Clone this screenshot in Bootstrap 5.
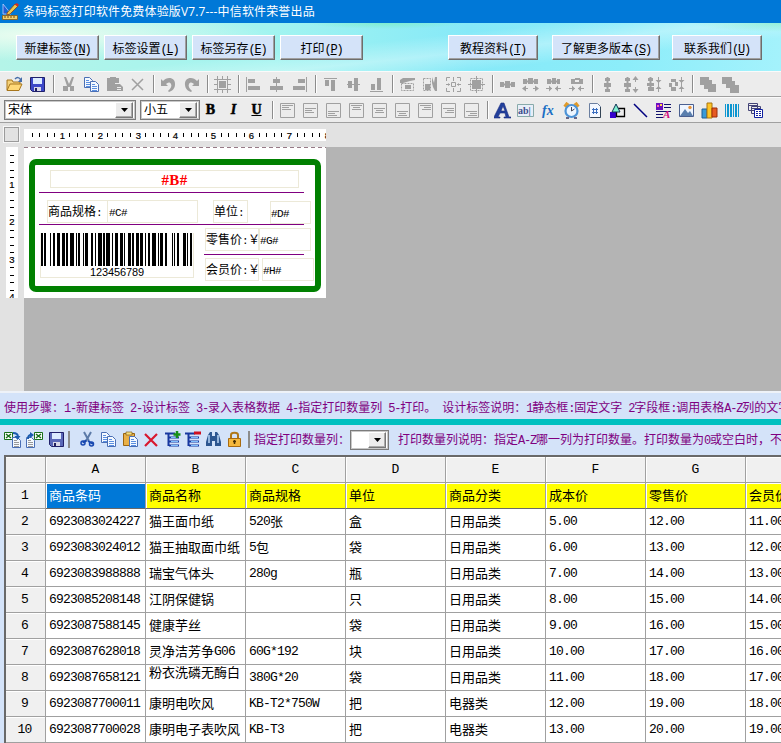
<!DOCTYPE html>
<html lang="zh-CN">
<head>
<meta charset="utf-8">
<meta name="viewport" content="width=device-width, initial-scale=1">
<title>条码标签打印软件</title>
<link href="https://cdn.jsdelivr.net/npm/bootstrap@5.3.0/dist/css/bootstrap.min.css" rel="stylesheet">
<style>
html,body{height:743px;overflow:hidden}
body{width:781px;font:12px/14px "Noto Sans CJK SC",sans-serif;color:#000;background:#d4e3f9}
svg{display:block;flex:none}
.la{font-family:"Liberation Mono",monospace;font-size:12px;letter-spacing:-1.2px;line-height:1}
.titlebar{height:23px;background:#0078d7;color:#fff;padding-left:2px}
.titlebar .cap{font-family:"Open Sans","Noto Sans CJK SC",sans-serif;margin-left:4px;white-space:nowrap;letter-spacing:.15px}
.banner{height:48px;padding:12px 0 0 16px;background:
 radial-gradient(ellipse 80px 6px at 385px 0,#6fedb088,transparent),
 radial-gradient(ellipse 90px 9px at 781px 0,#7cecc099,transparent),
 linear-gradient(174deg,transparent 45%,#ffffff55 60%,transparent 75%),
 radial-gradient(ellipse 230px 26px at 40px 12px,#ecfdf0,transparent),
 linear-gradient(90deg,#b4f4e8,#a2f4f0 35%,#86e9f8 60%,#8cedfa 80%,#a4f2fc)}
.winbtn{height:25px;background:#d4e3f9;border:1px solid;border-color:#fff #6d6d6d #6d6d6d #fff;box-shadow:inset -1px -1px #a0a0a0;border-radius:0;padding:0;font-size:12px;line-height:20px;color:#000;white-space:pre;flex:none}
.w-std{width:83px;margin-right:5px}
.w-mid{width:90px}
.w-wide{width:108px;margin:0 12px 0 14px}
.lastbtn{margin-right:19px}
.tools{height:26px;background:#ececec;border-top:1px solid #fafafa;border-bottom:1px solid #a0a0a0}
.tool{width:23px;flex:none;display:flex;justify-content:center}
.vsep{width:8px;height:18px;flex:none;border-left:4px solid transparent;background:linear-gradient(90deg,#8c8c8c 1px,#fff 1px,#fff 2px,transparent 2px) no-repeat content-box}
.lead-in{width:3px;flex:none}
.combo{height:20px;background:#fff;border:1px solid #7b7b7b;outline:1px solid #c8c8c8;outline-offset:-2px;padding:1px 2px 1px 3px;flex:none}
.drop{width:18px;height:16px;background:#ececec;border:1px solid;border-color:#fff #777 #777 #fff;box-shadow:inset -1px -1px #aaa}
.combo>span:first-child:not(.drop){margin-top:-3px}
.fmt{font:bold 14px/18px "Liberation Serif",serif;-webkit-text-stroke:.5px #000}
#fontbox{width:132px;margin-left:4px}
#sizebox{width:60px;margin-right:-1px}
.editor{height:268px;background:#e2e2e2;padding-top:6px}
.desk{background:#b4b4b4}
.paper{width:302px;height:151px;background:#fff;position:relative;overflow:hidden}
.ruler-row{height:18px}
.corner{width:15px;height:15px;border:1px solid #9b9b9b;outline:1px solid #f6f6f6;margin:-2px 5px 0 4px}
.desk-row{padding-left:6px}
#vr{margin-right:6px}
.fld{position:absolute;border:1px solid #ece9d8;white-space:pre;line-height:20px}
.fld .la{font-size:11px;letter-spacing:-.6px}
.f-b{left:26px;top:23px;width:249px;height:18px;color:#f00;text-align:center;line-height:17px}
.fld.f-b .la{font:bold 15px/17px "Liberation Serif",serif;letter-spacing:.3px}
.f-1{left:23px;top:53px;width:61px;height:23px}
.f-2{left:83px;top:53px;width:91px;height:23px;padding-left:1px}
.f-3{left:189px;top:53px;width:35px;height:23px}
.f-4{left:246px;top:54px;width:41px;height:23px}
.f-5{left:181px;top:81px;width:54px;height:23px}
.f-6{left:235px;top:81px;width:52px;height:23px}
.f-7{left:181px;top:111px;width:54px;height:23px}
.f-8{left:238px;top:111px;width:52px;height:23px}
.f-n{left:16px;top:118px;width:154px;height:13px;text-align:center;line-height:11px;border-top:0}
.fld.f-n .la{font-family:"Liberation Sans",sans-serif;font-size:11px;letter-spacing:-.1px}
.purple{color:#800080;white-space:pre}
.hint{height:28px;border-top:2px solid #eef2f8;padding:7px 0 0 4px;background:#d4e3f9;overflow:hidden}
.teal{height:6px;background:#00c0c0}
.gridbar{height:30px;padding:0 0 2px 1px;overflow:hidden}
.gsep{width:2px;height:17px;background:#8c8c8c;flex:none}
.g1{margin:0 7px 0 1px}
.g2{margin:0 4px 0 4px}
#qty{width:39px;margin:2px 9px 0 0}
.sheet{margin-left:4px;border-left:2px solid #696969;border-top:2px solid #696969;height:288px;background:#fff;overflow:hidden}
.sheet .la{position:relative;top:-1px}
.line{height:26px;display:flex}
.line>:first-child{margin-left:-1px}
.cellx{width:100px;height:26px;border-right:1px solid #a0a0a0;border-bottom:1px solid #a0a0a0;padding:0 4px;font-size:13px;line-height:24px;white-space:pre;flex:none}
.cellx .la{font-size:13px;letter-spacing:-.8px}
.cellx.rh{width:41px}
.cellx.hd{background:#f0f0f0;text-align:center;box-shadow:inset 1px 1px #fff;padding:0 4px 0 3px}
.cellx.yl{background:#ff0;box-shadow:inset 1px 1px #fff;border-bottom-color:#696969}
.cellx.sel{background:#0078d7;color:#fff}
.cellx.up{line-height:14px}
.cellx:not(.hd){padding:0 3px}
</style>
</head>
<body>
<div class="titlebar d-flex align-items-center">
 <svg width="17" height="17" viewBox="0 0 17 17"><path d="M1 1v10h8z" fill="#2a5bd0" stroke="#b8d0ff" stroke-width=".8"/><path d="M3.500 6v3H6z" fill="#0078d7"/><path d="M5 10L13 1l3 2-8 8-3 1z" fill="#e9c84c" stroke="#8a3b12" stroke-width=".8"/><path d="M12.500 1.500L15 0l2 2-1.500 1.500z" fill="#d03020"/><path d="M.5 12.500h15v4H.5z" fill="#f0d070" stroke="#8a5a10" stroke-width=".8"/><path d="M3 13v2m3-2v2m3-2v2m3-2v2" stroke="#7a4a08"/></svg>
 <span class="cap">条码标签打印软件免费体验版V7.7---中信软件荣誉出品</span>
</div>
<div class="banner d-flex sx">
 <button class="btn winbtn w-std">新建标签(<u>N</u>)</button>
 <button class="btn winbtn w-std">标签设置(<u>L</u>)</button>
 <button class="btn winbtn w-std">标签另存(<u>E</u>)</button>
 <button class="btn winbtn w-std">打印(<u>P</u>)</button>
 <button class="btn winbtn w-mid ms-auto">教程资料(<u>T</u>)</button>
 <button class="btn winbtn w-wide">了解更多版本(<u>S</u>)</button>
 <button class="btn winbtn w-mid lastbtn">联系我们(<u>U</u>)</button>
</div>
<div class="tools d-flex align-items-center" id="bar1"></div>
<div class="tools d-flex align-items-center sx" id="bar2">
 <div class="combo d-flex justify-content-between align-items-center me-1" id="fontbox"><span>宋体</span><span class="drop d-flex align-items-center justify-content-center"><svg width="7" height="4"><path d="M0 0h7L3.500 4z"/></svg></span></div>
 <div class="combo d-flex justify-content-between align-items-center" id="sizebox"><span>小五</span><span class="drop d-flex align-items-center justify-content-center"><svg width="7" height="4"><path d="M0 0h7L3.500 4z"/></svg></span></div>
</div>
<div class="editor d-flex flex-column">
 <div class="d-flex ruler-row"><div class="corner"></div><svg id="hr" width="302" height="12"></svg></div>
 <div class="d-flex flex-grow-1 desk-row">
  <svg id="vr" width="12" height="151"></svg>
  <div class="desk flex-grow-1">
   <div class="paper sx">
    <svg width="302" height="151" id="art"></svg>
    <div class="fld f-b"><b>#B#</b></div>
    <div class="fld f-1">商品规格:</div><div class="fld f-2">#C#</div>
    <div class="fld f-3">单位:</div><div class="fld f-4">#D#</div>
    <div class="fld f-5">零售价:￥</div><div class="fld f-6">#G#</div>
    <div class="fld f-7">会员价:￥</div><div class="fld f-8">#H#</div>
    <div class="fld f-n">123456789</div>
   </div>
  </div>
 </div>
</div>
<div class="hint purple sx"><span>使用步骤：1-新建标签 2-设计标签 3-录入表格数据 4-指定打印数量列 5-打印。 设计标签说明：1静态框:固定文字 2字段框:调用表格A-Z列的文字</span></div>
<div class="teal"></div>
<div class="gridbar d-flex align-items-center" id="bar3"></div>
<div class="sheet sx" id="sheet"></div>

<script src="https://cdn.jsdelivr.net/npm/bootstrap@5.3.0/dist/js/bootstrap.bundle.min.js"></script>
<script>
const G='#a0a0a0';
const svg=b=>`<svg width="17" height="17" viewBox="0 0 17 17">${b}</svg>`;
const g=d=>`<path d="${d}" fill="${G}"/>`;
const s=(d,c=G,w=1)=>`<path d="${d}" fill="none" stroke="${c}" stroke-width="${w}"/>`;
const tool=b=>`<div class="tool">${b}</div>`, sep='<div class="vsep"></div>';
const flop=`<path d="M1.500 1.500h14v14h-12l-2-2z" fill="#3c48c8" stroke="#20206a"/><path d="M4 2h9v6H4z" fill="#dcebff"/><path d="M5 11h7v4H5z" fill="#d8d8e8"/><path d="M6 12h2v3H6z" fill="#202060"/>`;
const doc=(x,y)=>`<path d="M${x+.5} ${y+.5}h5l3 3v7h-8z" fill="#f4f9ff" stroke="#4a6fb5"/><path d="M${x+2} ${y+3.500}h3m-3 2h5m-5 2h5m-5 2h5" stroke="#5b8fe0" fill="none"/>`;
const I={
open:'<path d="M1 14V4h5l1 2h7v3" fill="#f5d27a" stroke="#a8761c"/><path d="M1 14.500L4 8h12l-3 6.500z" fill="#ffd978" stroke="#a8761c"/><path d="M9 3c2-2 4-2 6 1" fill="none" stroke="#456ca8" stroke-width="1.500"/><path d="M16 1v5h-4z" fill="#456ca8"/>',
save:flop,
cut:g('M4 1h2l3 7 3-7h2l-3 9h3v5h-4v-4H8v4H3v-5h4z'),
copy:doc(1,1)+doc(7,5),
paste:g('M1 2h3V1h6v1h3v5H9v8H1z')+g('M9 8h5l3 3v4H9z')+s('M11 11.500h4m-4 2h4','#ececec'),
del:s('M3 3l11 11M14 3L3 14',G,1.500),
undo:g('M1 3l2 2c4-5 13-4 12 4-.5 4-3 6-6 7l-1-1c3-3 4-5 3-7-1-2-3-2-5 0l2 2H1z'),
redo:g('M16 3l-2 2C10 0 1 1 2 9c.5 4 3 6 6 7l1-1C6 12 5 10 6 8c1-2 3-2 5 0l-2 2h7z'),
snap:g('M5 5h7v7H5z')+s('M3.500 0v17M13.500 0v17M0 3.500h17M0 13.500h17')+s('M0 8.500h3m11 0h3M8.500 0v3m0 11v3'),
al:s('M1.500 1v15')+g('M3 3h7v4H3zM3 10h12v4H3z'),
ac:s('M8.500 1v15')+g('M5 3h7v4H5zM2 10h13v4H2z'),
ar:s('M15.500 1v15')+g('M7 3h7v4H7zM2 10h12v4H2z'),
at:s('M2 2.500h13')+g('M3 4h4v6H3zM9 4h4v11H9z'),
am:s('M2 8.500h13')+g('M3 5h4v7H3zM9 2h4v13H9z'),
ab:s('M2 15.500h13')+g('M3 8h4v6H3zM9 2h4v12H9z'),
w1:g('M1 4l3-2h12v2l-5 1-7 2H1zM6 9h6v4H6z')+`<path d="M2.500 7.500h12v7h-12z" fill="none" stroke="${G}" stroke-dasharray="2 1"/>`,
w2:g('M10 1l2 6 1-6h2v14h-2l-2-4-1-4zM3 8h5v6H3z')+`<path d="M1.500 2.500h7v12h-7z" fill="none" stroke="${G}" stroke-dasharray="2 1"/>`,
w3:s('M1.500 5V1.500H5M12 1.500h3.500V5M1.500 12v3.500H5m7 0h3.500V12M6.500 6.500h4v4h-4zM1 8.500h4m7 0h4M8.500 1v4m0 7v4')+g('M3 7l2 1.500L3 10zM14 7l-2 1.500 2 1.500z'),
w4:g('M4 4h9v9H4z')+s('M0 8.500h17M8.500 0v17')+`<path d="M2.500 2.500h12v12h-12z" fill="none" stroke="${G}" stroke-dasharray="2 1"/>`,
h0:s('M1 8.500h15',G,2)+g('M1 6h4v5H1zM6 5h5v7H6zM12 6h4v5h-4z'),
h1:s('M1 5.500h15',G,2)+s('M1 12.500h5m5 0h5')+g('M1 3h4v5H1zM6 2h5v6H6zM12 3h4v5h-4zM0 12.500l4-3v6zM17 12.500l-4-3v6z'),
h2:s('M2 5.500h13',G,2)+s('M1 12.500h6m3 0h6')+g('M2 3h4v5H2zM7 2h4v6H7zM12 3h3v5h-3zM7 12.500l-3-3v6zM10 12.500l3-3v6z'),
h3:s('M1 12.500h6m3 0h6')+g('M3 3h4v5H3zM7 2h5v2H7zM11 3h4v5h-4zM7 6h5v2H7zM7 12.500l-3-3v6zM10 12.500l3-3v6z'),
v0:s('M8.500 1v15',G,2)+g('M6 2h5v3H6zM5 7h7v4H5zM6 13h5v3H6z'),
v1:s('M5.500 1v15',G,2)+s('M13.500 2v4m0 5v4')+g('M3 2h5v3H3zM2 7h7v4H2zM3 13h5v3H3zM13.500 0l3 4h-6zM13.500 17l3-4h-6z'),
v2:s('M5.500 1v14',G,2)+s('M13.500 1v15')+g('M3 2h5v3H3zM2 7h7v3H2zM3 11h6v4H3zM13.500 7l3-3h-6zM13.500 10l3 3h-6z'),
v3:s('M13.500 1v15')+g('M3 3h5v3H3zM1 7h3v4H1zM7 6h3v4H7zM3 11h5v4H3zM13.500 7l3-3h-6zM13.500 10l3 3h-6z'),
fr:g('M1 1h9v3h3v4h4v8H9v-3H5V9H1z'),
bk:g('M0 1h10v4h3v4h4v8H8v-5H4V8H0z')};
document.getElementById('bar1').innerHTML='<div class="lead-in"></div>'+
 [['open','save'],['cut','copy','paste','del'],['undo','redo'],['snap'],['al','ac','ar'],['at','am','ab'],['w1','w2','w3','w4'],['h0','h1','h2','h3'],['v0','v1','v2','v3'],['fr','bk']]
 .map(a=>a.map(k=>tool(svg(I[k]))).join('')).join(sep);
// text-position buttons: left/centre/right, each with top/middle/bottom
let pos='';
for(const h of [0,1,2])for(const v of [0,1,2]){
 const y=[3,6,9][v]+.5,x=w=>h==0?3:h==1?(17-w)/2:14-w;
 pos+=tool(svg(s('M1.500 1.500h14v14h-14z')+[[11,0],[7,2],[9,4]].map(([w,d])=>s(`M${x(w)} ${y+d}h${w}`)).join('')));
}
const C=[
'<path d="M0 15L7 1h3l5 14h2v1h-7v-1h2l-1-4H6l-2 4h2v1H0zM7 9h4L9 4z" fill="#22409c" stroke="#1c2c80" stroke-width=".6"/>',
'<path d="M.5 2.500h16v12H.5z" fill="#e8eef8" stroke="#8aa"/><text x="1" y="12" font-family="Liberation Serif" font-weight="bold" font-size="10" fill="#3c4f8c">ab|</text>',
'<text x="2" y="13" font-family="Liberation Serif" font-style="italic" font-weight="bold" font-size="14" fill="#1b6fc4">fx</text>',
'<path d="M2 5l3-4M15 5l-3-4" stroke="#e09a2a" stroke-width="4"/><circle cx="8.500" cy="9" r="6" fill="#eef6ff" stroke="#4d94d8" stroke-width="2.200"/><path d="M8.500 9V5m0 4l3-2" fill="none" stroke="#445"/><path d="M3 16h3m5 0h3" stroke="#668" stroke-width="2"/>',
'<path d="M3.500 1.500h8l3 3v11h-11z" fill="#f4f8ff" stroke="#6b7fa0"/><path d="M14.500 5v10.500h-10" fill="none" stroke="#345"/><path d="M7.500 6v6m3-6v6M6 7.500h6m-6 3h6" stroke="#3b6fc0"/>',
'<path d="M1 10h6v6H1z" fill="#3300cc"/><path d="M7.500 6.500h8v8h-8z" fill="none" stroke="#000" stroke-width="1.300"/><path d="M7 2l4 8H3z" fill="#7ff0d0" stroke="#135"/>',
'<path d="M2 2l13 13" stroke="#000080" stroke-width="1.500"/>',
'<path d="M1 1h7v7H1z" fill="#6a10c0"/><path d="M5 2h2v2H5z" fill="#ffd84a"/><path d="M2 3h2v2H2z" fill="#f6a"/><path d="M9 2.500h7M9 5.500h7M1 9.500h15M1 12.500h7M1 15.500h7" stroke="#10106a"/><text x="8" y="16" font-family="Liberation Serif" font-style="italic" font-weight="bold" font-size="11" fill="#d41080">A</text>',
'<path d="M1.500 2.500h14v12h-14z" fill="#eef5ff" stroke="#4a5f90"/><path d="M2 14l5-7 3 4 2-2 3 5z" fill="#5a7fae"/><circle cx="12" cy="5.500" r="1.700" fill="#e8923a"/>',
'<path d="M1 7h5v9H1z" fill="#3a9ad8" stroke="#1c5c98"/><path d="M6 1h5v15H6z" fill="#ffc526" stroke="#a87410"/><path d="M11 6h5v9h-5z" fill="#e65a22" stroke="#9c2c08"/>',
'<path d="M1 2h1v13H1zM3 2h2v13H3zM6 2h2v13H6zM9 2h1v13H9zM11 2h2v13h-2zM14 2h1v13h-1z" fill="#0d96d0"/>',
'<path d="M1.500 1.500h9v7h-9zM4.500 4.500h9v7h-9z" fill="#eee" stroke="#447"/><path d="M1 3.500h10M4 6.500h10" stroke="#447"/><path d="M7.500 7.500h8v8h-8z" fill="#fff" stroke="#1020a0"/><path d="M9 9.500h2m1 0h2m-5 2h2m1 0h2m-5 2h2m1 0h2" stroke="#1020a0"/>'];
document.getElementById('bar2').insertAdjacentHTML('beforeend',
 '<div class="tool fmt"><span class="raw">B</span></div><div class="tool fmt fst-italic"><span class="raw">I</span></div><div class="tool fmt"><u class="raw">U</u></div>'+sep+pos+sep+C.map(c=>tool(svg(c))).join(''));
// rulers: five divisions per centimetre
let hr='<rect width="302" height="12" fill="#fff"/>',vr='<rect width="12" height="151" fill="#fff"/>';
const num=(x,y,n)=>`<text x="${x}" y="${y}" text-anchor="middle" font-family="Liberation Sans" font-size="9.500" fill="#000" stroke="#000" stroke-width=".2">${n}</text>`;
for(let i=1;i<=40;i++){const p=Math.round(i*7.57),q=Math.round(i*7.5);
 hr+=i%5?`<rect x="${p}" y="4" width="1" height="4"/>`:num(p+.5,9.5,i/5);
 if(i<21)vr+=i%5?`<rect x="4" y="${q}" width="4" height="1"/>`:num(6,q+3,i/5);}
document.getElementById('hr').innerHTML=hr;document.getElementById('vr').innerHTML=vr;
// label artwork: frame, rules and barcode
const bars=[[41,2],[44,2],[50,1],[53,2],[57,3],[62,3],[66,2],[70,4],[76,1],[78,2],[83,1],[85,3],[91,2],[95,1],[98,4],[103,2],[106,4],[112,1],[115,3],[120,3],[124,1],[128,3],[132,2],[136,3],[140,3],[145,1],[148,2],[152,4],[158,1],[160,3],[165,2],[172,1],[174,1],[177,2],[183,3],[187,1],[190,2]];
document.getElementById('art').innerHTML='<path d="M0 .5h302" stroke="#967a86" stroke-dasharray="4 3"/>'+
 '<rect x="8" y="15" width="286" height="127" rx="4" fill="none" stroke="#008000" stroke-width="6"/>'+
 '<path d="M15 45.500h265M15 77.500h265M180 107.500h100" stroke="#800080"/><path d="M17 86v33M169.500 86v33" stroke="#ece9d8"/>'+
 bars.map(([x,w])=>`<rect x="${x-24}" y="86" width="${w}" height="33"/>`).join('');
// grid toolbar
const xl=x=>`<path d="M${x+.5} 1.500h8v7h-8z" fill="#fff" stroke="#187018"/><path d="M${x+2} 3l5 4m0-4l-5 4" stroke="#187018" stroke-width="1.500"/>`;
const tree='<path d="M1 2.500h10M4.500 3v12M5 6.500h10M5 10.500h10M5 14.500h10" stroke="#1838a0" stroke-width="2"/><path d="M7 6.500h7M7 10.500h7M7 14.500h7" stroke="#7fc0ff"/>';
const B=[[xl(0)+doc(8,6).replace(/#5b8fe0/,'#999')+'<path d="M9 2c3 0 5 1 5 4" fill="none" stroke="#1c5cae" stroke-width="2"/><path d="M10.500 5h6l-3 4z" fill="#1c5cae"/>',22],
[xl(8)+doc(0,6).replace(/#5b8fe0/,'#999')+'<path d="M2 8c0-3 1-4 3-4" fill="none" stroke="#1c5cae" stroke-width="2"/><path d="M4 1l4 3-4 3z" fill="#1c5cae"/>',22],
[flop.replace('#3c48c8','#5a68b8'),22],0,
['<path d="M5 1l5 9M12 1L7 10" stroke="#5d7ba8" stroke-width="2"/><path d="M3.500 11.500l4-2M14 13l-5-3" stroke="#1848b0" stroke-width="2"/><circle cx="4" cy="12" r="2" fill="none" stroke="#1848b0" stroke-width="1.500"/><circle cx="12.500" cy="13" r="2" fill="none" stroke="#1848b0" stroke-width="1.500"/>',21],
[doc(1,1)+doc(7,5),21],
['<path d="M1.500 2.500h11v12h-11z" fill="#e8b048" stroke="#9a6510"/><path d="M4 1h6v3H4z" fill="#f8e080" stroke="#806020" stroke-width=".7"/>'+doc(7,5),22],
['<path d="M2 3l12 12M14 3L2 15" stroke="#d81830" stroke-width="2.200"/>',21],
[tree+'<path d="M13 0v7M9.500 3.500h7" stroke="#189018" stroke-width="2.500"/>',20],
[tree+'<path d="M10 2h7" stroke="#d01020" stroke-width="3"/>',21],
['<path d="M3 4l2-3h2v4h3V1h2l2 3 2 7v4h-6v-5H7v5H1v-4z" fill="#2d5690"/><path d="M4 4v8M13 4v8" stroke="#bcd8f6" stroke-width="1.500"/>',21],
['<path d="M5 8V4c0-3 7-3 7 0v4" fill="none" stroke="#b07818" stroke-width="2"/><path d="M2.500 7.500h12v8h-12z" fill="#f6b83c" stroke="#a86a10"/><path d="M8.500 9v4M7 10.500h3" stroke="#4a3000" stroke-width="1.500"/>',20],0];
let first=true;
document.getElementById('bar3').innerHTML=B.map(b=>{if(!b){const r=first?'<div class="gsep g1"></div>':'<div class="gsep g2"></div>';first=false;return r}
 return `<div class="d-flex justify-content-center flex-shrink-0" style="width:${b[1]}px">${svg(b[0])}</div>`}).join('')+
 '<span class="purple sx">指定打印数量列：</span><div class="combo d-flex justify-content-end align-items-center" id="qty"><span class="drop d-flex align-items-center justify-content-center"><svg width="7" height="4"><path d="M0 0h7L3.500 4z"/></svg></span></div><span class="purple sx">打印数量列说明：指定A-Z哪一列为打印数量。打印数量为0或空白时，不</span>';
// sheet
const rows=[['商品条码','商品名称','商品规格','单位','商品分类','成本价','零售价','会员价'],
['6923083024227','猫王面巾纸','520张','盒','日用品类','5.00','12.00','11.00'],
['6923083024012','猫王抽取面巾纸','5包','袋','日用品类','6.00','13.00','12.00'],
['6923083988888','瑞宝气体头','280g','瓶','日用品类','7.00','14.00','13.00'],
['6923085208148','江阴保健锅','','只','日用品类','8.00','15.00','14.00'],
['6923087588145','健康芋丝','','袋','日用品类','9.00','16.00','15.00'],
['6923087628018','灵净洁芳争G06','60G*192','块','日用品类','10.00','17.00','16.00'],
['6923087658121','粉衣洗磷无酶白','380G*20','袋','日用品类','11.00','18.00','17.00'],
['6923087700011','康明电吹风','KB-T2*750W','把','电器类','12.00','19.00','18.00'],
['6923087700028','康明电子表吹风','KB-T3','把','电器类','13.00','20.00','19.00']];
document.getElementById('sheet').innerHTML='<div class="line"><div class="cellx hd rh"></div>'+[...'ABCDEFGH'].map(c=>`<div class="cellx hd">${c}</div>`).join('')+'</div>'+
 rows.map((r,i)=>`<div class="line"><div class="cellx hd rh">${i+1}</div>`+r.map((t,j)=>`<div class="cellx${i?'':' yl'}${i||j?'':' sel'}${t[0]=='粉'?' up':''}">${t}</div>`).join('')+'</div>').join('');
// half-width runs take the fixed-pitch Latin face
document.querySelectorAll('.sx').forEach(root=>{
 const w=document.createTreeWalker(root,NodeFilter.SHOW_TEXT),list=[];
 while(w.nextNode())if(w.currentNode.data.trim()&&!w.currentNode.parentNode.closest('.raw,svg'))list.push(w.currentNode);
 list.forEach(n=>{const t=document.createElement('template');t.innerHTML=n.data.replace(/[\x20-\x7e]+/g,'<span class="la">$&</span>');n.replaceWith(t.content)});
});
</script>
</body>
</html>
